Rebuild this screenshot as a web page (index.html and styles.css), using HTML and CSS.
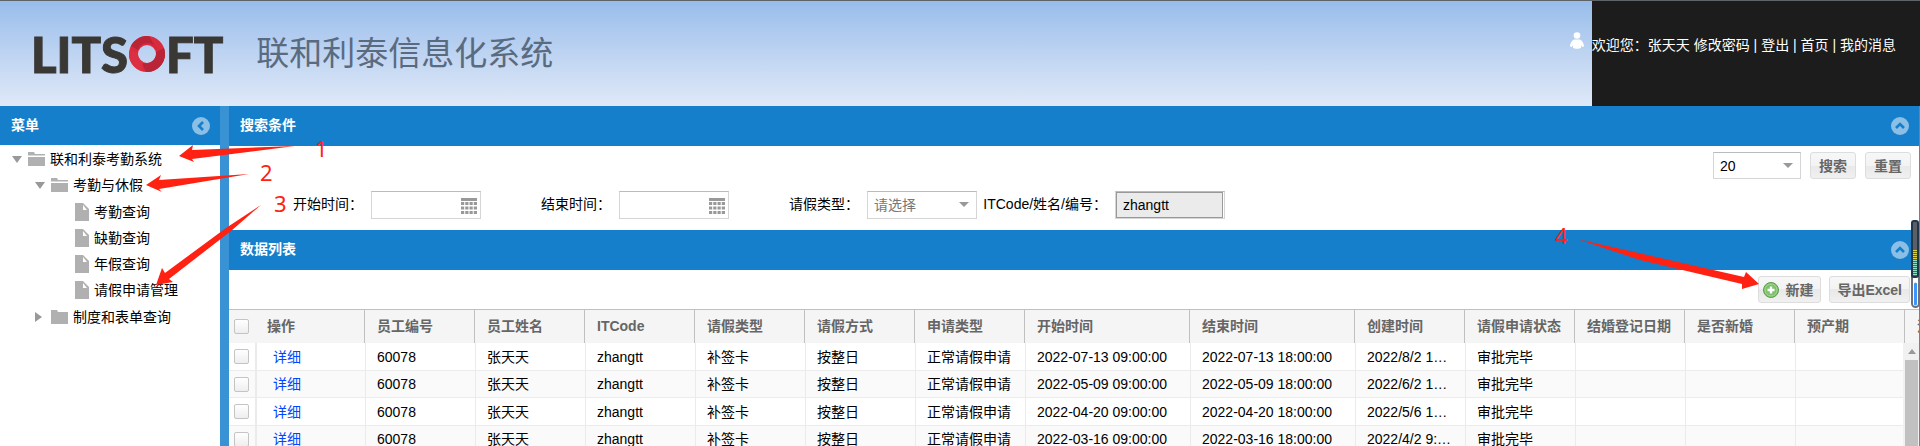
FILE: index.html
```html
<!DOCTYPE html>
<html lang="zh-CN">
<head>
<meta charset="utf-8">
<title>联和利泰信息化系统</title>
<link rel="stylesheet" href="styles.css">
</head>
<body>
<header class="banner">
  <div class="brand">
    <span class="logo"><span>LITS</span><svg class="logo-ring" viewBox="0 0 36 36" aria-label="O"><circle cx="18" cy="18" r="13.500" fill="none" stroke="#d92b3d" stroke-width="9"/><path d="M2 10A18 18 0 0 1 20 0L28 14A10 10 0 0 0 9 14Z" fill="#b92436"/><path d="M35 12A18 18 0 0 1 17 36L12 26A10 10 0 0 0 27 16Z" fill="#b92436"/><path d="M0 15L9 16A9 9 0 0 0 14 26L13 35A18 18 0 0 1 0 15Z" fill="#dc3042"/></svg><span>FT</span></span>
    <span class="system-name">联和利泰信息化系统</span>
  </div>
  <nav class="user-nav">
    <svg class="user-icon" viewBox="0 0 14 17" fill="#fff"><circle cx="7" cy="3.500" r="3.300"/><path d="M4 7.500h6c2.500 1 4 4.500 4 7l-2 .500-1-2v3c-2 1-6 1-8 0v-3l-1 2-2-.500c0-2.500 1.500-6 4-7z"/></svg>
    <span class="user-text">欢迎您：张天天 <a href="#">修改密码</a> | <a href="#">登出</a> | <a href="#">首页</a> | <a href="#">我的消息</a></span>
  </nav>
</header>
<div class="layout">
  <aside class="sidebar">
    <div class="panel-head sidebar-head">
      <h2>菜单</h2>
      <button class="round" aria-label="收起菜单"><svg viewBox="0 0 18 18"><circle cx="9" cy="9" r="9" fill="#8bbfe5"/><path d="M11 5L7 9l4 4" fill="none" stroke="#157fcc" stroke-width="2.600"/></svg></button>
    </div>
    <ul class="tree">
      <li>
        <a class="node level-1" href="#"><span class="arrow open"></span><svg class="folder" viewBox="0 0 17 14"><path d="M0 0h6l1 2h10v2H0zM0 5h17v9H0z" fill="#b0b0b0"/><path d="M0 3h17v1H0z" fill="#d8d8d8"/></svg>联和利泰考勤系统</a>
        <ul>
          <li>
            <a class="node level-2" href="#"><span class="arrow open"></span><svg class="folder" viewBox="0 0 17 14"><path d="M0 0h6l1 2h10v2H0zM0 5h17v9H0z" fill="#b0b0b0"/><path d="M0 3h17v1H0z" fill="#d8d8d8"/></svg>考勤与休假</a>
            <ul class="leaves">
              <li><a class="node level-3" href="#"><svg class="doc" viewBox="0 0 14 18"><path d="M0 0h8l6 6v12H0z" fill="#b0b0b0"/><path d="M8 2v5h4z" fill="#fff"/></svg>考勤查询</a></li>
              <li><a class="node level-3" href="#"><svg class="doc" viewBox="0 0 14 18"><path d="M0 0h8l6 6v12H0z" fill="#b0b0b0"/><path d="M8 2v5h4z" fill="#fff"/></svg>缺勤查询</a></li>
              <li><a class="node level-3" href="#"><svg class="doc" viewBox="0 0 14 18"><path d="M0 0h8l6 6v12H0z" fill="#b0b0b0"/><path d="M8 2v5h4z" fill="#fff"/></svg>年假查询</a></li>
              <li><a class="node level-3" href="#"><svg class="doc" viewBox="0 0 14 18"><path d="M0 0h8l6 6v12H0z" fill="#b0b0b0"/><path d="M8 2v5h4z" fill="#fff"/></svg>请假申请管理</a></li>
            </ul>
          </li>
          <li><a class="node level-2" href="#"><span class="arrow closed"></span><svg class="folder" viewBox="0 0 17 14"><path d="M0 0h6l1 2h10v12H0z" fill="#b0b0b0"/></svg>制度和表单查询</a></li>
        </ul>
      </li>
    </ul>
  </aside>
  <main class="content">
    <section>
      <div class="panel-head">
        <h2>搜索条件</h2>
        <button class="round" aria-label="收起搜索条件"><svg viewBox="0 0 18 18"><circle cx="9" cy="9" r="9" fill="#8bbfe5"/><path d="M5 11l4-4 4 4" fill="none" stroke="#157fcc" stroke-width="2.600"/></svg></button>
      </div>
      <form class="search">
        <div class="search-actions">
          <span class="select-box page-size"><select aria-label="每页条数"><option>20</option></select></span>
          <button class="btn" type="button">搜索</button>
          <button class="btn" type="button">重置</button>
        </div>
        <div class="fields">
          <div class="field"><label for="start">开始时间：</label><span class="date-box"><input id="start" type="text"><svg class="calendar" viewBox="0 0 16 16"><path d="M0 1.500h16" stroke="#999" stroke-width="3"/><path d="M0 5.500h16M0 10h16M0 14.500h16" stroke="#999" stroke-width="3" stroke-dasharray="3.200 1.060"/></svg></span></div>
          <div class="field"><label for="end">结束时间：</label><span class="date-box"><input id="end" type="text"><svg class="calendar" viewBox="0 0 16 16"><path d="M0 1.500h16" stroke="#999" stroke-width="3"/><path d="M0 5.500h16M0 10h16M0 14.500h16" stroke="#999" stroke-width="3" stroke-dasharray="3.200 1.060"/></svg></span></div>
          <div class="field"><label for="type">请假类型：</label><span class="select-box"><select id="type" class="empty"><option>请选择</option></select></span></div>
          <div class="field"><label for="code">ITCode/姓名/编号：</label><span class="fixed-box"><input id="code" type="text" value="zhangtt" readonly></span></div>
        </div>
      </form>
    </section>
    <section class="data">
      <div class="panel-head">
        <h2>数据列表</h2>
        <button class="round" aria-label="收起数据列表"><svg viewBox="0 0 18 18"><circle cx="9" cy="9" r="9" fill="#8bbfe5"/><path d="M5 11l4-4 4 4" fill="none" stroke="#157fcc" stroke-width="2.600"/></svg></button>
      </div>
      <div class="toolbar">
        <button class="btn btn-new"><svg class="plus" viewBox="0 0 16 16"><circle cx="8" cy="8" r="7.500" fill="#7fc06c" stroke="#5a9e4b"/><circle cx="8" cy="8" r="6" fill="none" stroke="#a4d795"/><path d="M8 4.500v7M4.500 8h7" stroke="#fff" stroke-width="2.400"/></svg>新建</button>
        <button class="btn">导出Excel</button>
      </div>
      <div class="grid">
        <table>
          <colgroup><col class="c-check"><col span="6"><col><col class="c-time"><col class="c-time"><col span="5"><col></colgroup>
          <thead>
            <tr><th class="check"><input type="checkbox" aria-label="全选"></th><th>操作</th><th>员工编号</th><th>员工姓名</th><th>ITCode</th><th>请假类型</th><th>请假方式</th><th>申请类型</th><th>开始时间</th><th>结束时间</th><th>创建时间</th><th>请假申请状态</th><th>结婚登记日期</th><th>是否新婚</th><th>预产期</th><th>流产</th></tr>
          </thead>
          <tbody>
            <tr><td class="check"><input type="checkbox" aria-label="选择第1行"></td><td class="op"><a href="#">详细</a></td><td>60078</td><td>张天天</td><td>zhangtt</td><td>补签卡</td><td>按整日</td><td>正常请假申请</td><td>2022-07-13 09:00:00</td><td>2022-07-13 18:00:00</td><td>2022/8/2 1…</td><td>审批完毕</td><td></td><td></td><td></td><td></td></tr>
            <tr><td class="check"><input type="checkbox" aria-label="选择第2行"></td><td class="op"><a href="#">详细</a></td><td>60078</td><td>张天天</td><td>zhangtt</td><td>补签卡</td><td>按整日</td><td>正常请假申请</td><td>2022-05-09 09:00:00</td><td>2022-05-09 18:00:00</td><td>2022/6/2 1…</td><td>审批完毕</td><td></td><td></td><td></td><td></td></tr>
            <tr><td class="check"><input type="checkbox" aria-label="选择第3行"></td><td class="op"><a href="#">详细</a></td><td>60078</td><td>张天天</td><td>zhangtt</td><td>补签卡</td><td>按整日</td><td>正常请假申请</td><td>2022-04-20 09:00:00</td><td>2022-04-20 18:00:00</td><td>2022/5/6 1…</td><td>审批完毕</td><td></td><td></td><td></td><td></td></tr>
            <tr><td class="check"><input type="checkbox" aria-label="选择第4行"></td><td class="op"><a href="#">详细</a></td><td>60078</td><td>张天天</td><td>zhangtt</td><td>补签卡</td><td>按整日</td><td>正常请假申请</td><td>2022-03-16 09:00:00</td><td>2022-03-16 18:00:00</td><td>2022/4/2 9:…</td><td>审批完毕</td><td></td><td></td><td></td><td></td></tr>
          </tbody>
        </table>
        <div class="scrollbar"><span class="scroll-up"></span><span class="thumb"></span></div>
      </div>
    </section>
  </main>
</div>
<svg class="notes notes-left" width="400" height="320" viewBox="0 0 400 320">
  <path d="M179 156L193 145L192 150L295 146L192 159L194 162Z"/>
  <path d="M146 185L161 175L159 180L249 174L159 189L162 192Z"/>
  <path d="M156 285L162 268L165 273L226 228L261 205L231 231L169 279L173 282Z"/>
  <text x="315" y="157">1</text><text x="260" y="181">2</text><text x="274" y="212">3</text>
</svg>
<svg class="notes notes-right" width="400" height="320" viewBox="1520 0 400 320">
  <path d="M1577 239L1744 277L1746 272L1759 284L1742 289L1742 284L1640 260Z"/>
  <text x="1555" y="244">4</text>
</svg>
<svg class="meter" width="9" height="88" viewBox="0 0 9 88">
  <rect x="1" y="38" width="7" height="49" rx="3.500" fill="#fff" stroke="#6c7078" stroke-width="2"/>
  <rect x="1" y="1" width="6" height="56" rx="2" fill="#5b5f66" stroke="#20364a" stroke-width="2"/>
  <path d="M4 30v9" stroke="#d9d23c" stroke-width="4" stroke-dasharray="1 1"/>
  <path d="M4 40v16" stroke="#8de0c4" stroke-width="4" stroke-dasharray="1 1"/>
  <path d="M4.500 64v20" stroke="#3f95ff" stroke-width="3" stroke-linecap="round"/>
</svg>
</body>
</html>
```
FILE: styles.css
```css
* { box-sizing: border-box; }
body {
  margin: 0;
  height: 100vh;
  position: relative;
  overflow: hidden;
  display: flex;
  flex-direction: column;
  background: #fff;
  color: #000;
  font: 14px/20px "Liberation Sans", "Noto Sans CJK SC", sans-serif;
}
a { color: inherit; text-decoration: none; }
ul { margin: 0; padding: 0; list-style: none; }
h2 { margin: 0; font-size: 14px; line-height: 20px; }
button, input, select { font: inherit; color: inherit; margin: 0; }

.banner {
  flex: none;
  height: 106px;
  display: flex;
  justify-content: space-between;
  border-top: 1px solid #5f6368;
  background:
    linear-gradient(#1b1c1b, #1b1c1b) right / 328px 100% no-repeat,
    linear-gradient(#98bdeb, #c5d8f3 60%, #dfe9f8);
}
.brand { display: flex; align-items: center; gap: 33px; padding: 4px 0 0 31px; }
.logo {
  display: flex;
  align-items: center;
  gap: 1px;
  font: 900 49px/50px Lato, sans-serif;
  -webkit-text-stroke: 1px #3a3835;
  color: #3a3835;
}
.logo-ring { width: 36px; height: 36px; }
.brand { padding-bottom: 4px; }
.system-name { font-size: 33px; font-weight: 400; line-height: 40px; color: #5a6b80; }
.user-nav { display: flex; align-items: flex-start; gap: 8px; padding: 31px 24px 0 0; color: #fff; }
.user-icon { width: 14px; height: 17px; }
.user-text { padding-top: 3px; white-space: nowrap; }

.layout { flex: 1; min-height: 0; display: flex; border-right: 1px solid #3892d4; }
.sidebar { flex: none; width: 229px; border-right: 9px solid #3892d4; }
.content { flex: 1; min-width: 0; display: flex; flex-direction: column; }
.panel-head {
  height: 40px;
  display: flex;
  align-items: center;
  justify-content: space-between;
  padding: 0 10px 0 11px;
  background: #157fcc;
  color: #fff;
}
.panel-head h2 { padding-bottom: 2px; }
.round { width: 18px; height: 18px; padding: 0; border: 0; background: none; display: flex; }
.round svg { width: 18px; height: 18px; }
.sidebar-head { height: 39px; }

.tree { padding-top: 1px; }
.node { display: flex; align-items: center; height: 26px; white-space: nowrap; }
.level-1 { padding-left: 12px; }
.level-2 { padding-left: 35px; }
.level-3 { padding-left: 75px; }
.leaves { padding: 1px 0; }
.arrow { width: 16px; display: flex; }
.arrow::before { content: ""; border: 5px solid transparent; }
.open::before { border-top: 7px solid #999; border-bottom: 0; }
.closed::before { border-left: 7px solid #999; border-right: 0; }
.folder { width: 17px; height: 14px; margin-right: 5px; }
.doc { width: 14px; height: 18px; margin-right: 5px; }

.search { padding: 6px 8px 11px 4px; }
.search-actions { display: flex; justify-content: flex-end; gap: 9px; }
.btn {
  height: 27px;
  padding: 0 8px;
  border: 1px solid #ddd;
  border-radius: 3px;
  background: linear-gradient(#f7f7f7, #f3f3f3 50%, #e9e9e9 50%, #f0f0f0);
  color: #666;
  font-weight: bold;
  line-height: 20px;
  display: flex;
  align-items: center;
}
.fields { display: grid; grid-template-columns: repeat(4, 248px); margin-top: 12px; }
.field { display: flex; justify-content: flex-end; align-items: center; gap: 8px; white-space: nowrap; }
.field label { padding-bottom: 2px; }
.select-box, .date-box, .fixed-box {
  position: relative;
  width: 110px;
  height: 28px;
  border: 1px solid #d5d5d5;
  border-top-color: #bbb;
  display: flex;
}
.page-size { width: 88px; height: 27px; }
.select-box select, .date-box input {
  appearance: none;
  width: 100%;
  padding: 0 6px;
  border: 0;
  background: #fff;
}
.select-box::after {
  content: "";
  position: absolute;
  top: 10px;
  right: 7px;
  border: 5px solid transparent;
  border-top-color: #999;
  border-bottom: 0;
  pointer-events: none;
}
.select-box .empty { color: #777; }
.calendar { position: absolute; top: 6px; right: 3px; width: 16px; height: 16px; }
.fixed-box { padding-right: 1px; }
.fixed-box input { width: 100%; padding: 0 6px; border: 1px solid #999; background: #ebebeb; }

.data { flex: 1; min-height: 0; display: flex; flex-direction: column; }
.data .panel-head, .toolbar { flex: none; }
.toolbar { height: 39px; padding: 0 9px; display: flex; justify-content: flex-end; align-items: center; gap: 8px; }
.toolbar .btn { padding: 0 7px; }
.toolbar .btn-new { padding-left: 4px; gap: 6px; }
.plus { width: 16px; height: 16px; }

.grid { position: relative; flex: 1; min-height: 0; overflow: hidden; }
table { width: 1786px; table-layout: fixed; border-collapse: separate; border-spacing: 0; }
col { width: 110px; }
.c-check { width: 26px; }
.c-time { width: 165px; }
th, td { padding: 0 0 0 12px; text-align: left; white-space: nowrap; overflow: hidden; }
th {
  height: 34px;
  padding-bottom: 2px;
  border-top: 1px solid #c0c0c0;
  border-right: 1px solid #c0c0c0;
  background: #f5f5f5;
  color: #666;
}
td { height: 28px; padding-left: 11px; border-left: 1px solid #ebebeb; border-bottom: 1px solid #ebebeb; }
tbody tr:nth-child(even) td { height: 27px; background: #fafafa; }
th.check, td.check { padding: 0 0 0 5px; border-left: 0; }
th.check { border-right: 0; }
td.op { padding-left: 16px; border-left-width: 2px; color: #0045ff; }
.check input {
  appearance: none;
  display: block;
  width: 15px;
  height: 15px;
  border: 1px solid #c4c4c4;
  border-radius: 2px;
  background: linear-gradient(#fff, #eee);
}
.scrollbar {
  position: absolute;
  top: 34px;
  right: 0;
  bottom: 0;
  width: 16px;
  padding: 6px 1px 0 2px;
  background: #f1f1f1;
  display: flex;
  flex-direction: column;
  align-items: center;
  gap: 6px;
}
.scroll-up { border: 4px solid transparent; border-top: 0; border-bottom: 5px solid #999; }
.thumb { flex: 1; width: 100%; background: #c1c1c1; }

.notes, .meter { position: absolute; pointer-events: none; }
.notes { top: 0; fill: #ff2112; font: 22px "Noto Sans", sans-serif; }
.notes-left { left: 0; }
.notes-right { right: 0; }
.meter { top: 220px; right: 0; }
```
